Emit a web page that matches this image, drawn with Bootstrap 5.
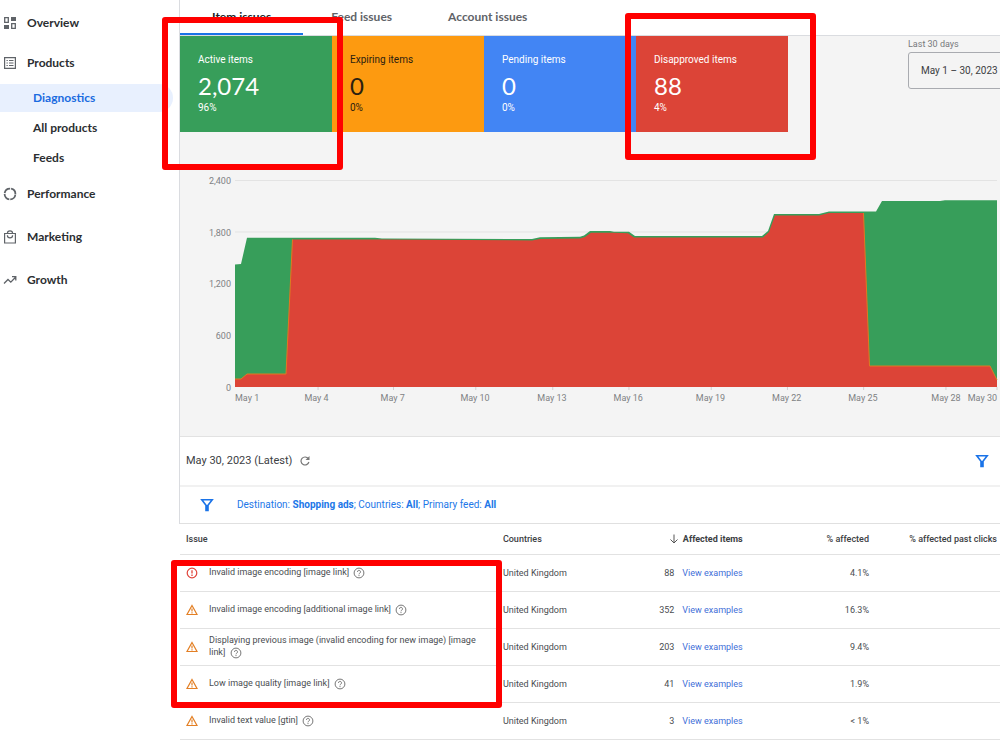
<!DOCTYPE html>
<html lang="en">
<head>
<meta charset="utf-8">
<meta name="viewport" content="width=device-width, initial-scale=1">
<title>Diagnostics</title>
<link href="https://cdn.jsdelivr.net/npm/bootstrap@5.3.0/dist/css/bootstrap.min.css" rel="stylesheet">
<style>
body{font-family:Roboto,"Liberation Sans",sans-serif;font-size:10px;line-height:12px;color:#4a4d51;background:#fff;overflow-x:hidden}
a{text-decoration:none}
svg{flex:none;display:block}
.side{flex:0 0 179px;padding-top:3px;font-family:Lato,sans-serif;font-weight:700;font-size:12px;line-height:16px}
.side a{color:#2b2e31;display:flex;align-items:center}
.side .item-a{height:40px;padding-left:3px;gap:10px}
.side .item-b{height:43px;padding-left:3px;gap:10px}
.side .sub-items{display:grid;gap:2px;margin:1px 6px 0 0}
.side .item-sub{height:28px;padding-left:33px}
.side .item-sub.active{background:#e8f0fe;color:#1a6be0;border-radius:0 14px 14px 0}
.content-pane{min-width:0}
.framed{border-left:1px solid #dadce0}
.issue-tabs{height:36px;border-bottom:1px solid #dadce0;font-family:Lato,sans-serif;font-weight:700;font-size:12px}
.issue-tabs a{color:#5f6368;padding:11px 28px 0 28px;height:35px;line-height:12px}
.issue-tabs a.active{color:#202124;border-bottom:2px solid #1a73e8;padding:11px 32px 0 32px}
.overview{background:#f4f4f4;border-bottom:1px solid #e2e2e2;height:401px}
.stat{width:152px;height:96px;padding:18px 0 0 18px}
.stat .num{font-family:Lato,sans-serif;font-size:24px;line-height:28px;margin:6px 0 2px}
.st-green{background:#379e5a;color:#fff}.st-orange{background:#fd9a10;color:#2b2110}
.st-blue{background:#4285f4;color:#fff}.st-red{background:#dc4437;color:#fff}
.period{width:92px;padding-top:2px;color:#77797c;font-size:9px}
.period label{display:block}
.period button{width:120px;height:37px;margin-top:2px;border:1px solid #a9abb0;border-radius:3px;background:transparent;padding:0 12px;text-align:left;font-size:10px;color:#3c4043;white-space:nowrap}
.chart-wrap{padding:48px 3px 0 55px}
.chart-wrap svg{overflow:visible}
.chart-wrap text{font-size:9px;fill:#808284}
.report-date{height:50px;border-bottom:2px solid #f1f1f1;padding:0 11px 0 6px;font-size:11px;color:#3c4043}
.filter-row{height:37px;border-bottom:1px solid #e0e0e0;padding-left:20px;gap:23px}
.filter-row a{color:#2277e8}
.plain-btn{border:0;background:none;padding:0}
.table-pane{padding-left:1px}
.issues{table-layout:fixed;width:100%;margin:0;font-size:9px}
.issues th{height:30px;font-weight:500;padding:0 8px;color:#3c4043;white-space:nowrap}
.issues td{height:37px;padding:0 8px}
.issues tr{border-bottom:1px solid #e2e2e2}
.issues th:first-child,.issues td:first-child{padding-left:6px}
.issues th:last-child{padding:0 3px 0 0}
.issues td a{color:#3f6fd8}
.issue-line{gap:11px}
.issue-line button{vertical-align:middle;margin-left:2px;height:12px;line-height:12px}
.c1{width:38.4%}.c2{width:14%}.c3{width:17.2%}.c4{width:15.4%}.c5{width:15%}
.mark-box{position:absolute;border:6px solid #f00;border-radius:3px;pointer-events:none}
.mark-active{left:-17px;top:17px;width:181px;height:153px}
.mark-disapproved{left:446px;top:13px;width:191px;height:147px}
.mark-issues{left:-8px;top:560px;width:331px;height:148px}
</style>
</head>
<body>
<svg width="0" height="0" class="position-absolute" aria-hidden="true">
<symbol id="i-help" viewBox="0 0 12 12"><circle cx="6" cy="6" r="4.900" fill="none" stroke="#777" stroke-width="1"/><path d="M4.500 4.900a1.500 1.500 0 1 1 2.300 1.200Q6 6.600 6 7.300M6 8.100v1" fill="none" stroke="#777"/></symbol>
<symbol id="i-warn" viewBox="0 0 12 12"><path d="M6 1.500 11 10.500H1Z" fill="none" stroke="#e37f24" stroke-width="1.200"/><path d="M6 4.500v3M6 8.300v1.200" stroke="#e37f24" stroke-width="1.200"/></symbol>
<symbol id="i-err" viewBox="0 0 12 12"><circle cx="6" cy="6" r="4.800" fill="none" stroke="#e0443a" stroke-width="1.200"/><path d="M6 3.200v3.400M6 7.600v1.300" stroke="#e0443a" stroke-width="1.300"/></symbol>
<symbol id="i-funnel" viewBox="0 0 14 14"><path d="M1.800 1.800h10.400L8 7.300V12.500H6V7.300Z" fill="none" stroke="#1a73e8" stroke-width="1.600"/><path d="M6 7h2v6H6z" fill="#1a73e8"/></symbol>
</svg>
<div class="d-flex">
<nav class="side" aria-label="Main">
  <a class="item-a" href="#"><svg width="14" height="14" viewBox="0 0 14 14" fill="none" stroke="#5f6368" stroke-width="1.300"><path d="M1.700 1.700h3.600v4.600H1.700ZM8.700 7.700h3.600v4.600H8.700Z"/><path d="M8 1h5v4H8ZM1 9h5v4H1Z" fill="#5f6368" stroke="none"/></svg>Overview</a>
  <a class="item-a" href="#"><svg width="14" height="14" viewBox="0 0 14 14" fill="none" stroke="#5f6368"><path d="M1.600 1.600h10.800v10.800H1.600Z" stroke-width="1.200"/><path d="M3.500 4.500h1.300M6 4.500h4.500M3.500 7h1.300M6 7h4.500M3.500 9.500h1.300M6 9.500h4.500"/></svg>Products</a>
  <div class="sub-items">
    <a class="item-sub active" href="#" aria-current="page">Diagnostics</a>
    <a class="item-sub" href="#">All products</a>
    <a class="item-sub" href="#">Feeds</a>
  </div>
  <a class="item-b" href="#"><svg width="14" height="14" viewBox="0 0 14 14" fill="none" stroke="#5f6368" stroke-width="1.800"><circle cx="7" cy="7" r="5.400" stroke-dasharray="7.480 1" stroke-dashoffset="-.5"/></svg>Performance</a>
  <a class="item-b" href="#"><svg width="14" height="14" viewBox="0 0 14 14" fill="none" stroke="#5f6368" stroke-width="1.200"><path d="M1.600 3.500h10.800v9.500H1.600ZM4.400 3.500a2.600 2.600 0 0 1 5.200 0M4.400 5.300a2.600 2.600 0 0 0 5.200 0"/></svg>Marketing</a>
  <a class="item-b" href="#"><svg width="14" height="14" viewBox="0 0 14 14" fill="none" stroke="#5f6368" stroke-width="1.300"><path d="M1 10.500 5 6.500 7.800 9.200 12.300 4.500M9 3.700h3.800V7.500"/></svg>Growth</a>
</nav>
<main class="content-pane flex-grow-1 position-relative">
  <div class="framed">
    <nav class="issue-tabs d-flex" aria-label="Issue type">
      <a class="active" href="#">Item issues</a><a href="#">Feed issues</a><a href="#">Account issues</a>
    </nav>
    <section class="overview">
      <div class="d-flex justify-content-between">
        <div class="d-flex">
          <div class="stat st-green"><div>Active items</div><div class="num">2,074</div><div>96%</div></div>
          <div class="stat st-orange"><div>Expiring items</div><div class="num">0</div><div>0%</div></div>
          <div class="stat st-blue"><div>Pending items</div><div class="num">0</div><div>0%</div></div>
          <div class="stat st-red"><div>Disapproved items</div><div class="num">88</div><div>4%</div></div>
        </div>
        <div class="period"><label for="range">Last 30 days</label><button id="range" type="button">May 1 – 30, 2023</button></div>
      </div>
      <div class="chart-wrap">
        <svg width="100%" height="230" role="img" aria-label="Active and disapproved items by day">
          <g stroke="#e3e3e3"><line x1="0" x2="100%" y1=".5" y2=".5"/><line x1="0" x2="100%" y1="52" y2="52"/><line x1="0" x2="100%" y1="104" y2="104"/><line x1="0" x2="100%" y1="155.500" y2="155.500"/></g>
          <g stroke="#d0d0d0"><line x1="10.900%" x2="10.900%" y1="207" y2="210"/><line x1="20.800%" x2="20.800%" y1="207" y2="210"/><line x1="31.600%" x2="31.600%" y1="207" y2="210"/><line x1="41.700%" x2="41.700%" y1="207" y2="210"/><line x1="51.700%" x2="51.700%" y1="207" y2="210"/><line x1="62.500%" x2="62.500%" y1="207" y2="210"/><line x1="72.500%" x2="72.500%" y1="207" y2="210"/><line x1="82.500%" x2="82.500%" y1="207" y2="210"/><line x1="93.300%" x2="93.300%" y1="207" y2="210"/><line x1="100%" x2="100%" y1="207" y2="210"/></g>
          <svg width="100%" height="207" viewBox="235 180 762 207" preserveAspectRatio="none">
            <path fill="#379e5a" d="M235 387V264.500L241 264 247 237.800H375L382 238.500 532 239 540 237.300 580 236.800 584 235.500 590 231H610L614 231.700H629L635 236H762L768 231 774 214H819L829 211.500H876L882 201H940L945 200.200H997V387Z"/>
            <path fill="#dc4437" d="M235 387V379H241L247 374H286L292.500 239.500H382L532 240.500 540 239 580 238.500 585 237 591 232.800H614L628 233.200 634 237.500H763L769 232 775 215.500H819L829 213H863.500L869.500 366H990L997 380V387Z"/>
            <path fill="none" stroke="#e07a20" stroke-width="1" d="M235 379H241L247 374H286L292.500 239.500M863.500 213 869.500 366H990L997 380"/>
          </svg>
          <g text-anchor="end"><text x="-4" y="4">2,400</text><text x="-4" y="56">1,800</text><text x="-4" y="107">1,200</text><text x="-4" y="159">600</text><text x="-4" y="211">0</text></g>
          <g text-anchor="middle"><text x="0" y="221" text-anchor="start">May 1</text><text x="10.700%" y="221">May 4</text><text x="20.700%" y="221">May 7</text><text x="31.500%" y="221">May 10</text><text x="41.600%" y="221">May 13</text><text x="51.600%" y="221">May 16</text><text x="62.400%" y="221">May 19</text><text x="72.400%" y="221">May 22</text><text x="82.400%" y="221">May 25</text><text x="93.300%" y="221">May 28</text><text x="100%" y="221" text-anchor="end">May 30</text></g>
        </svg>
      </div>
    </section>
    <div class="report-date d-flex align-items-center justify-content-between">
      <div class="d-flex align-items-center gap-2"><span>May 30, 2023 (Latest)</span><button class="plain-btn" type="button" aria-label="Refresh"><svg width="10" height="10" viewBox="0 0 10 10" fill="none" stroke="#777" stroke-width="1.200"><path d="M8.300 2.700A4 4 0 1 0 8.900 6"/><path d="M9.500 0V4H5.500Z" fill="#777" stroke="none"/></svg></button></div>
      <button class="plain-btn" type="button" aria-label="Filter"><svg width="14" height="14"><use href="#i-funnel"/></svg></button>
    </div>
    <div class="filter-row d-flex align-items-center">
      <svg width="14" height="14"><use href="#i-funnel"/></svg>
      <a href="#">Destination: <b>Shopping ads</b>; Countries: <b>All</b>; Primary feed: <b>All</b></a>
    </div>
  </div>
  <div class="table-pane">
  <table class="issues">
    <colgroup><col class="c1"><col class="c2"><col class="c3"><col class="c4"><col class="c5"></colgroup>
    <thead><tr><th>Issue</th><th>Countries</th><th><div class="d-flex justify-content-end align-items-center gap-1"><svg width="10" height="10" viewBox="0 0 10 10" fill="none" stroke="#555"><path d="M5 .5V9M1.500 5.500 5 9 8.500 5.500"/></svg><b>Affected items</b></div></th><th class="text-end">% affected</th><th class="text-end">% affected past clicks</th></tr></thead>
    <tbody>
    <tr><td><div class="issue-line d-flex align-items-center"><svg width="12" height="12"><use href="#i-err"/></svg><span>Invalid image encoding [image link] <button class="plain-btn" type="button" aria-label="Help"><svg width="12" height="12"><use href="#i-help"/></svg></button></span></div></td><td>United Kingdom</td><td><div class="d-flex justify-content-end gap-2"><span>88</span><a href="#">View examples</a></div></td><td class="text-end">4.1%</td><td></td></tr>
    <tr><td><div class="issue-line d-flex align-items-center"><svg width="12" height="12"><use href="#i-warn"/></svg><span>Invalid image encoding [additional image link] <button class="plain-btn" type="button" aria-label="Help"><svg width="12" height="12"><use href="#i-help"/></svg></button></span></div></td><td>United Kingdom</td><td><div class="d-flex justify-content-end gap-2"><span>352</span><a href="#">View examples</a></div></td><td class="text-end">16.3%</td><td></td></tr>
    <tr><td><div class="issue-line d-flex align-items-center"><svg width="12" height="12"><use href="#i-warn"/></svg><span>Displaying previous image (invalid encoding for new image) [image link] <button class="plain-btn" type="button" aria-label="Help"><svg width="12" height="12"><use href="#i-help"/></svg></button></span></div></td><td>United Kingdom</td><td><div class="d-flex justify-content-end gap-2"><span>203</span><a href="#">View examples</a></div></td><td class="text-end">9.4%</td><td></td></tr>
    <tr><td><div class="issue-line d-flex align-items-center"><svg width="12" height="12"><use href="#i-warn"/></svg><span>Low image quality [image link] <button class="plain-btn" type="button" aria-label="Help"><svg width="12" height="12"><use href="#i-help"/></svg></button></span></div></td><td>United Kingdom</td><td><div class="d-flex justify-content-end gap-2"><span>41</span><a href="#">View examples</a></div></td><td class="text-end">1.9%</td><td></td></tr>
    <tr><td><div class="issue-line d-flex align-items-center"><svg width="12" height="12"><use href="#i-warn"/></svg><span>Invalid text value [gtin] <button class="plain-btn" type="button" aria-label="Help"><svg width="12" height="12"><use href="#i-help"/></svg></button></span></div></td><td>United Kingdom</td><td><div class="d-flex justify-content-end gap-2"><span>3</span><a href="#">View examples</a></div></td><td class="text-end">&lt; 1%</td><td></td></tr>
    </tbody>
  </table>
  </div>
  <div class="mark-box mark-active"></div>
  <div class="mark-box mark-disapproved"></div>
  <div class="mark-box mark-issues"></div>
</main>
</div>
<script src="https://cdn.jsdelivr.net/npm/bootstrap@5.3.0/dist/js/bootstrap.bundle.min.js"></script>
</body>
</html>
